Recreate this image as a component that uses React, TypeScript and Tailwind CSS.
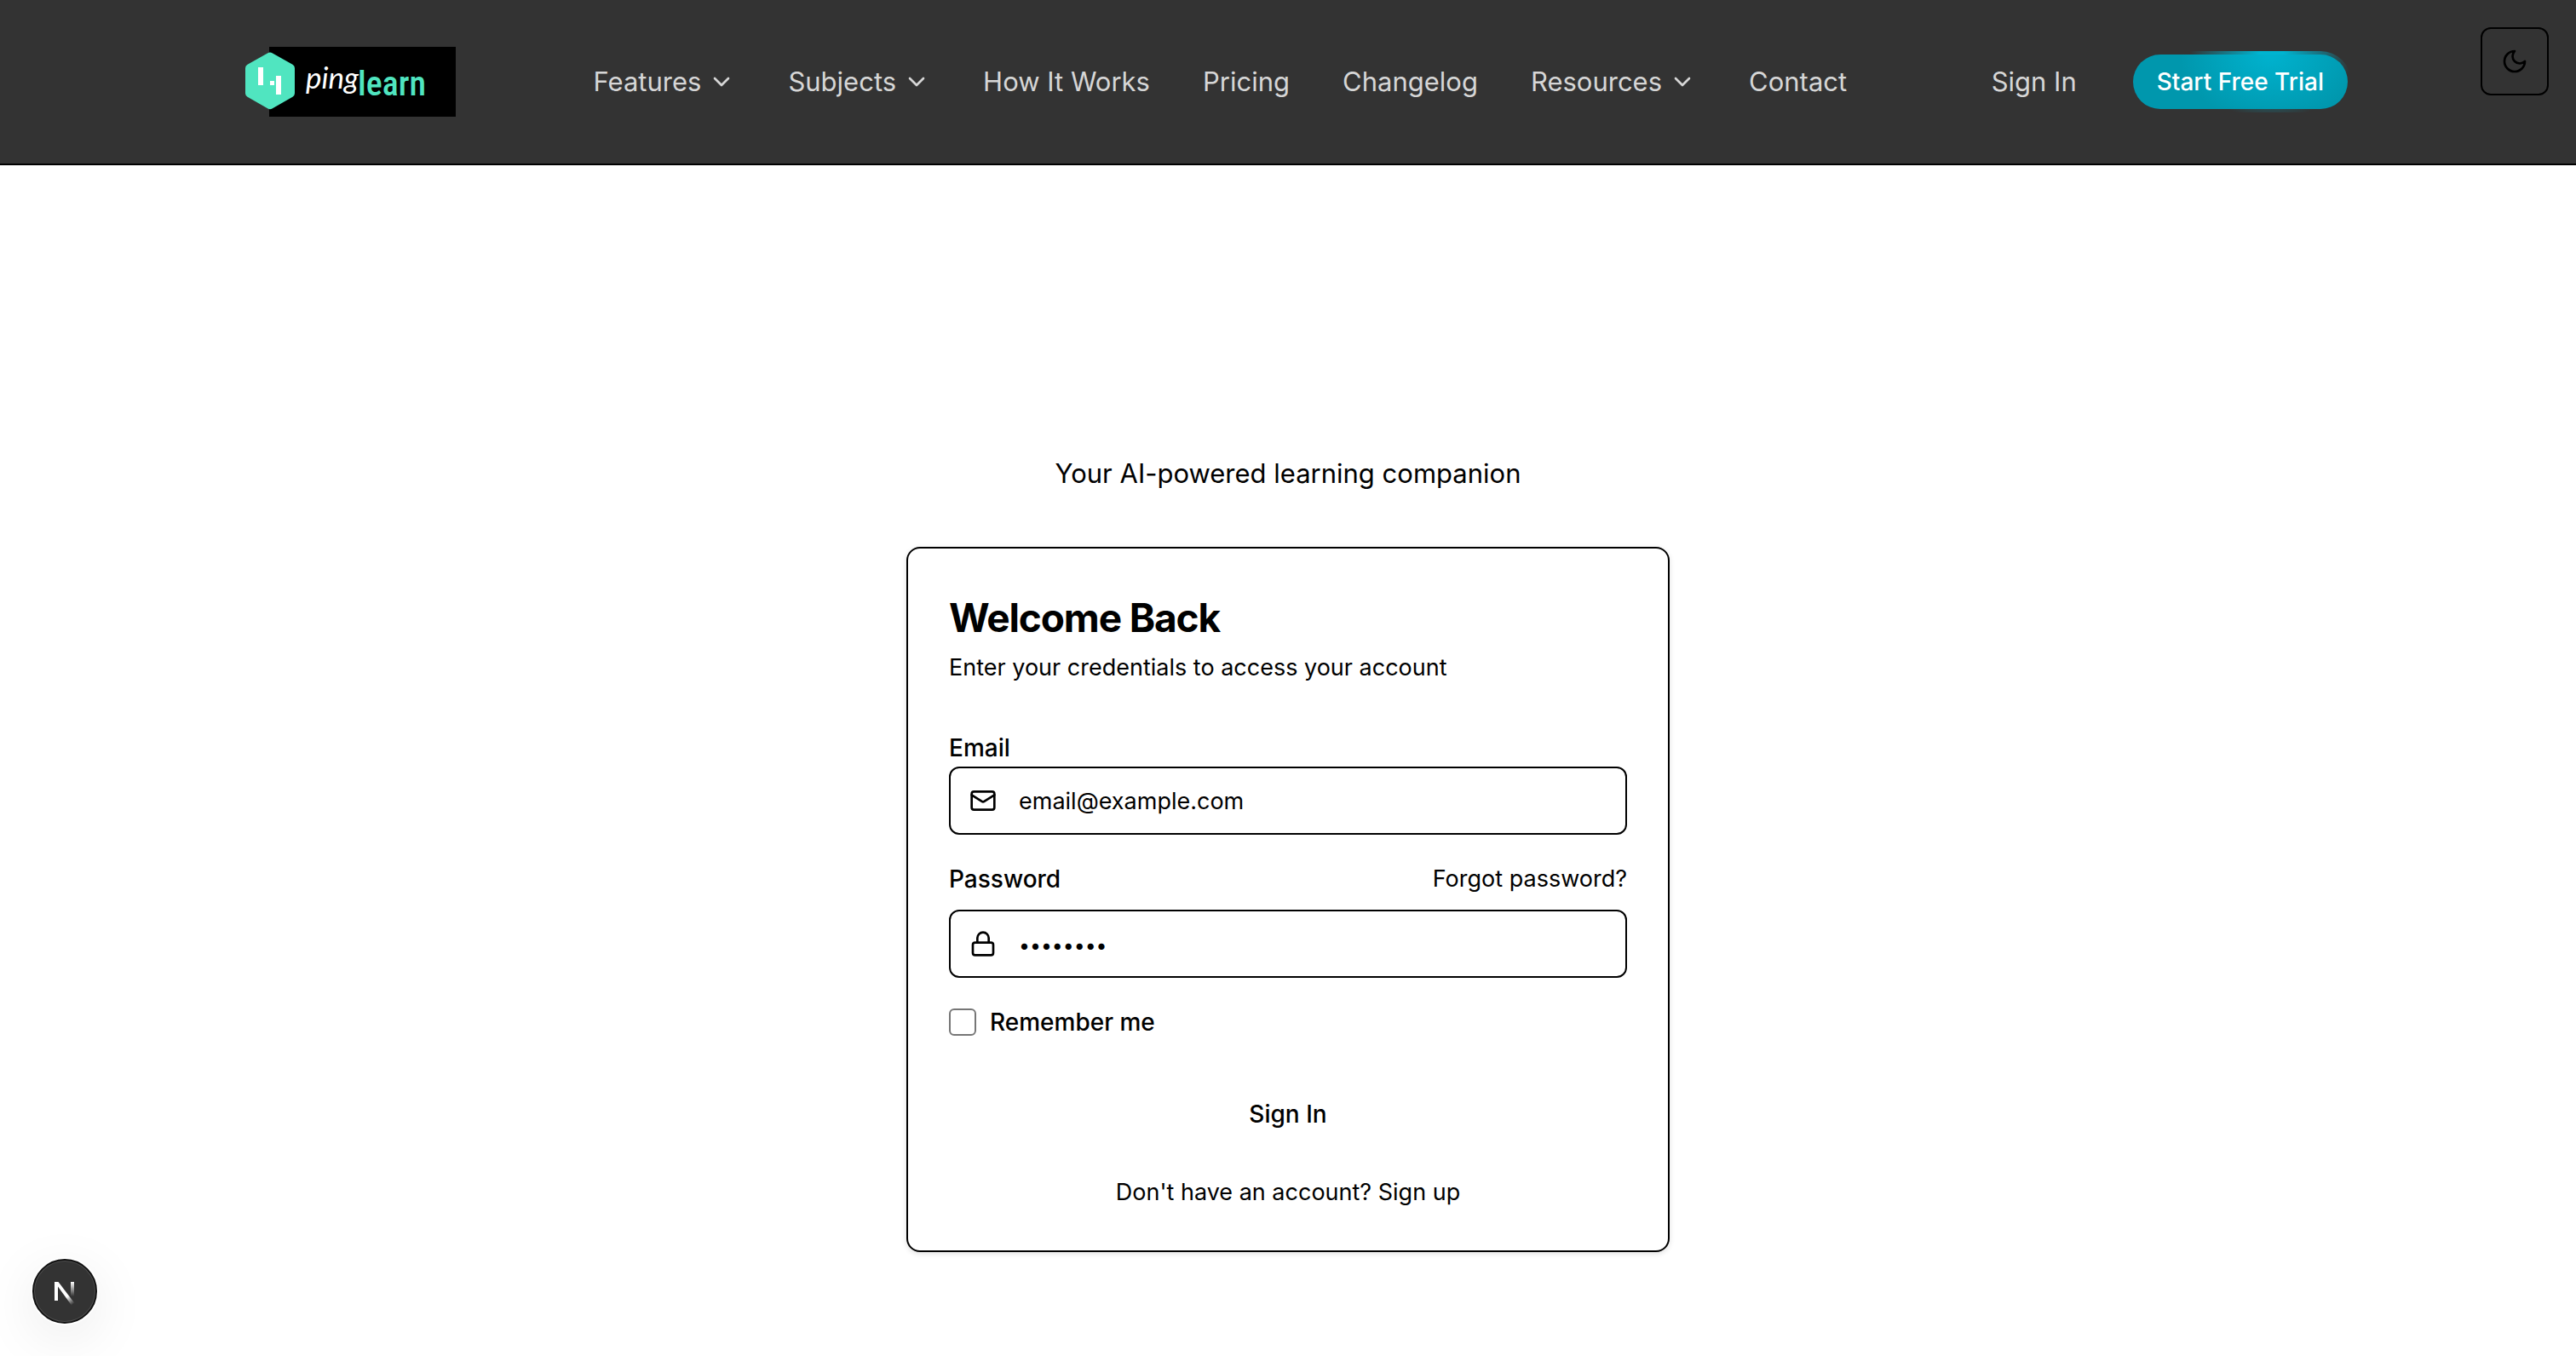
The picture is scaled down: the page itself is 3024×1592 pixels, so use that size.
import React from "react";
import { ChevronDown, Lock } from "lucide-react";

type NavItem = { label: string; menu?: boolean };

const navItems: NavItem[] = [
  { label: "Features", menu: true },
  { label: "Subjects", menu: true },
  { label: "How It Works" },
  { label: "Pricing" },
  { label: "Changelog" },
  { label: "Resources", menu: true },
  { label: "Contact" },
];

function Logo() {
  return (
    <a href="#home" aria-label="pinglearn" className="block shrink-0">
      <svg width="247" height="82" viewBox="0 0 247 82" className="block">
        <rect x="28" y="0" width="219" height="82" fill="#000" />
        <path
          d="M26.5 7.2a5 5 0 0 1 5 0L55.5 20.8a5 5 0 0 1 2.5 4.300V54.500a5 5 0 0 1-2.500 4.300L31.500 72.500a5 5 0 0 1-5 0L2.500 58.800A5 5 0 0 1 0 54.500V25.100a5 5 0 0 1 2.500-4.300Z"
          fill="#50e5c0"
        />
        <rect x="15" y="24" width="6" height="21" fill="#fff" />
        <rect x="29" y="40" width="5" height="5" fill="#fff" />
        <rect x="36" y="34" width="6" height="22" fill="#fff" />
        <text x="71" y="49" fill="#fff" fontFamily="Lato, sans-serif" fontStyle="italic" fontSize="35">
          ping
        </text>
        <text
          x="132"
          y="57"
          fill="#50e5c0"
          fontFamily="'Roboto Condensed', 'Liberation Sans Narrow', sans-serif"
          fontWeight="500"
          fontSize="40"
        >
          learn
        </text>
      </svg>
    </a>
  );
}

function MailIcon({ className }: { className?: string }) {
  return (
    <svg
      viewBox="0 0 24 24"
      fill="none"
      stroke="currentColor"
      strokeWidth="2"
      strokeLinecap="round"
      strokeLinejoin="round"
      className={className}
      aria-hidden="true"
    >
      <rect x="2" y="4" width="20" height="16" rx="2" />
      <path d="m22 7-8.97 5.7a1.94 1.94 0 0 1-2.06 0L2 7" />
    </svg>
  );
}

function MoonIcon({ className }: { className?: string }) {
  return (
    <svg
      viewBox="0 0 24 24"
      fill="none"
      stroke="currentColor"
      strokeWidth="2"
      strokeLinecap="round"
      strokeLinejoin="round"
      className={className}
      aria-hidden="true"
    >
      <path d="M12 3a6 6 0 0 0 9 9 9 9 0 1 1-9-9Z" />
    </svg>
  );
}

function Header() {
  return (
    <header className="border-b-2 border-black bg-[#333333]">
      <div className="mx-auto flex h-48 max-w-[2560px] items-center justify-between pr-8 pl-14">
        <Logo />
        <nav className="mr-2 flex items-center gap-[62px] text-[31px] leading-10 text-[#d6d6d6]">
          {navItems.map((item) =>
            item.menu ? (
              <button key={item.label} type="button" className="flex items-center gap-2">
                {item.label}
                <ChevronDown className="size-8" strokeWidth={2} />
              </button>
            ) : (
              <a key={item.label} href="#">
                {item.label}
              </a>
            ),
          )}
        </nav>
        <div className="flex items-center gap-[62px]">
          <a href="#signin" className="text-[31px] leading-10 text-[#d6d6d6]">
            Sign In
          </a>
          <div className="rounded-full bg-[radial-gradient(96px_80px_at_64%_0%,#00b4d0_15%,transparent_100%)] p-1">
            <button
              type="button"
              className="block h-16 rounded-full bg-[#0097ad] bg-[radial-gradient(106px_80px_at_64%_0%,#00b1cd_5%,#0097ad_100%)] px-7 text-[28px] font-medium text-white"
            >
              Start Free Trial
            </button>
          </div>
        </div>
      </div>
    </header>
  );
}

function NextBadge() {
  return (
    <button
      type="button"
      aria-label="Open developer tools"
      className="fixed bottom-9 left-9 flex size-20 items-center justify-center rounded-full shadow-[0_16px_64px_rgba(0,0,0,0.08)]"
    >
      <svg width="80" height="80" viewBox="0 0 80 80" fill="none" aria-hidden="true">
        <defs>
          <linearGradient id="diag" x1="40" y1="42" x2="50" y2="55" gradientUnits="userSpaceOnUse">
            <stop stopColor="#fff" />
            <stop offset="0.3" stopColor="#fff" />
            <stop offset="1" stopColor="#fff" stopOpacity="0" />
          </linearGradient>
          <linearGradient id="stem" x1="49" y1="29" x2="49" y2="46" gradientUnits="userSpaceOnUse">
            <stop stopColor="#fff" />
            <stop offset="1" stopColor="#fff" stopOpacity="0" />
          </linearGradient>
        </defs>
        <circle cx="40" cy="40" r="36" fill="#333" stroke="#4d4d4d" strokeWidth="2" />
        <circle cx="40" cy="40" r="37" stroke="#111" strokeWidth="2" />
        <path d="M28 29h4v22h-4Z" fill="#fff" />
        <path d="M28 29h4.500L51.500 54l-3.500 2.500Z" fill="url(#diag)" />
        <path d="M47 29h4v17h-4Z" fill="url(#stem)" />
      </svg>
    </button>
  );
}

const fieldClass =
  "h-20 w-full rounded-xl border-2 border-black bg-transparent pr-6 pl-20 text-black placeholder:text-black placeholder:opacity-100 outline-none";

function SignInCard() {
  return (
    <form
      onSubmit={(e) => e.preventDefault()}
      className="w-full max-w-4xl rounded-2xl border-2 border-black bg-white p-12 text-[27px] leading-10 text-black shadow-[0_2px_6px_rgba(0,0,0,0.12)]"
    >
      <h1 className="text-[46px] leading-[66px] font-bold tracking-tight">Welcome Back</h1>
      <p className="mt-1.5">Enter your credentials to access your account</p>

      <label htmlFor="email" className="mt-13.5 mb-0.5 block text-[28px] font-medium">
        Email
      </label>
      <div className="relative">
        <MailIcon className="absolute top-6 left-6 size-8" />
        <input id="email" type="email" placeholder="email@example.com" className={fieldClass} />
      </div>

      <div className="mt-8 flex items-center justify-between">
        <label htmlFor="password" className="text-[28px] font-medium">
          Password
        </label>
        <a href="#forgot">Forgot password?</a>
      </div>
      <div className="relative mt-4">
        <Lock className="absolute top-6 left-6 size-8" />
        <input
          id="password"
          type="password"
          placeholder="••••••••"
          className={`${fieldClass} placeholder:text-[23px]`}
        />
      </div>

      <div className="mt-8 flex items-center gap-4">
        <input
          id="remember"
          type="checkbox"
          className="size-8 appearance-none rounded-md border-2 border-[#767676] bg-white"
        />
        <label htmlFor="remember" className="text-[28px] font-medium">
          Remember me
        </label>
      </div>

      <button type="submit" className="mt-12 h-20 w-full text-[28px] font-medium">
        Sign In
      </button>
      <p className="mt-8 text-center">
        Don't have an account? <a href="#signup">Sign up</a>
      </p>
    </form>
  );
}

export default function App() {
  return (
    <div className="relative min-h-screen bg-white font-[Inter,sans-serif]">
      <Header />
      <button
        type="button"
        aria-label="Toggle theme"
        className="absolute top-8 right-8 flex size-20 items-center justify-center rounded-xl border-2 border-black text-black"
      >
        <MoonIcon className="size-8" />
      </button>
      <main className="flex flex-col items-center gap-16 px-8 pt-85 pb-12">
        <p className="text-[31px] leading-11 text-black">Your AI-powered learning companion</p>
        <SignInCard />
      </main>
      <NextBadge />
    </div>
  );
}
